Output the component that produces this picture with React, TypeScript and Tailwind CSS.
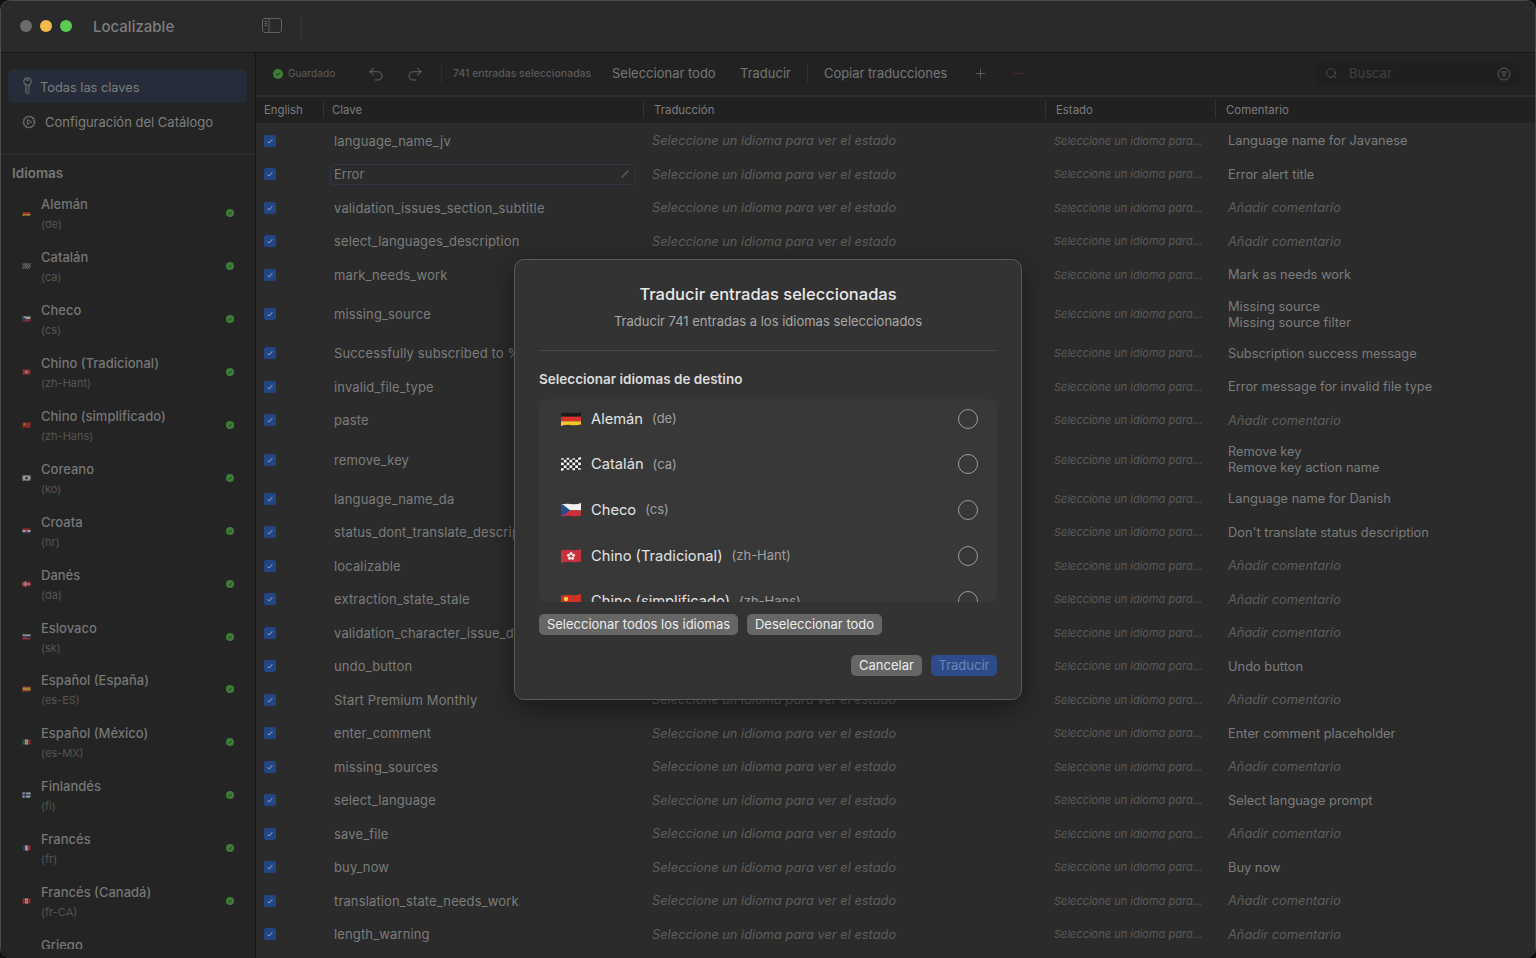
import { useId } from "react"
import { Minus, Plus, Redo2, Search, Undo2 } from "lucide-react"

const languages = [
  ["Alemán", "de", "de"],
  ["Catalán", "ca", "cat"],
  ["Checo", "cs", "cz"],
  ["Chino (Tradicional)", "zh-Hant", "hk"],
  ["Chino (simplificado)", "zh-Hans", "cn"],
  ["Coreano", "ko", "kr"],
  ["Croata", "hr", "hr"],
  ["Danés", "da", "dk"],
  ["Eslovaco", "sk", "sk"],
  ["Español (España)", "es-ES", "es"],
  ["Español (México)", "es-MX", "mx"],
  ["Finlandés", "fi", "fi"],
  ["Francés", "fr", "fr"],
  ["Francés (Canadá)", "fr-CA", "ca"],
  ["Griego", "el", "gr"],
]

const rows: { k: string; c?: string[] }[] = [
  { k: "language_name_jv", c: ["Language name for Javanese"] },
  { k: "Error", c: ["Error alert title"] },
  { k: "validation_issues_section_subtitle" },
  { k: "select_languages_description" },
  { k: "mark_needs_work", c: ["Mark as needs work"] },
  { k: "missing_source", c: ["Missing source", "Missing source filter"] },
  { k: "Successfully subscribed to %@", c: ["Subscription success message"] },
  { k: "invalid_file_type", c: ["Error message for invalid file type"] },
  { k: "paste" },
  { k: "remove_key", c: ["Remove key", "Remove key action name"] },
  { k: "language_name_da", c: ["Language name for Danish"] },
  { k: "status_dont_translate_description", c: ["Don't translate status description"] },
  { k: "localizable" },
  { k: "extraction_state_stale" },
  { k: "validation_character_issue_description" },
  { k: "undo_button", c: ["Undo button"] },
  { k: "Start Premium Monthly" },
  { k: "enter_comment", c: ["Enter comment placeholder"] },
  { k: "missing_sources" },
  { k: "select_language", c: ["Select language prompt"] },
  { k: "save_file" },
  { k: "buy_now", c: ["Buy now"] },
  { k: "translation_state_needs_work" },
  { k: "length_warning" },
]

function Flag({ code, className }: { code: string; className?: string }) {
  const clip = useId()
  const bands = (a: string, b: string, c: string) => (
    <>
      <rect width="20" height="4.67" fill={a} />
      <rect y="4.67" width="20" height="4.67" fill={b} />
      <rect y="9.33" width="20" height="4.67" fill={c} />
    </>
  )
  const vbands = (a: string, b: string, c: string) => (
    <>
      <rect width="6.67" height="14" fill={a} />
      <rect x="6.67" width="6.67" height="14" fill={b} />
      <rect x="13.33" width="6.67" height="14" fill={c} />
    </>
  )
  return (
    <svg viewBox="0 0 20 14" className={className}>
      <clipPath id={clip}>
        <path d="M0 1.4Q5 0.2 10 1T20 0V12.4Q15 13.6 10 12.9T0 14Z" />
      </clipPath>
      <g clipPath={`url(#${clip})`}>
        {code === "de" && bands("#1a1a1a", "#d8332a", "#f5c62e")}
        {code === "cat" &&
          Array.from({ length: 35 }).map((_, i) => (
            <rect
              key={i}
              x={(i % 7) * 2.85}
              y={Math.floor(i / 7) * 2.8}
              width="2.85"
              height="2.8"
              fill={i % 2 === 0 ? "#f2f2f2" : "#2a2a2a"}
            />
          ))}
        {code === "cz" && (
          <>
            <rect width="20" height="7.4" fill="#f0f0f0" />
            <rect y="7.4" width="20" height="7" fill="#c9303a" />
            <path d="M0 0L9 7.2L0 14Z" fill="#24508f" />
          </>
        )}
        {code === "hk" && (
          <>
            <rect width="20" height="14" fill="#c8313e" />
            <g fill="#f5e8e8">
              <circle cx="10" cy="4.4" r="1.5" />
              <circle cx="12.5" cy="6.2" r="1.5" />
              <circle cx="11.5" cy="9.2" r="1.5" />
              <circle cx="8.5" cy="9.2" r="1.5" />
              <circle cx="7.5" cy="6.2" r="1.5" />
            </g>
          </>
        )}
        {code === "cn" && (
          <>
            <rect width="20" height="14" fill="#cf3327" />
            <circle cx="5" cy="5" r="2.2" fill="#f2cf3a" />
          </>
        )}
        {code === "kr" && (
          <>
            <rect width="20" height="14" fill="#ececec" />
            <circle cx="10" cy="7" r="3.4" fill="#c8313e" />
            <path d="M6.6 7a3.4 3.4 0 0 0 6.8 0Z" fill="#24508f" />
            <path d="M2 3l3-2M15 1l3 2M2 11l3 2M15 13l3-2" stroke="#222" strokeWidth="1.2" />
          </>
        )}
        {code === "hr" && (
          <>
            {bands("#d0303a", "#f0f0f0", "#24508f")}
            <rect x="8" y="3.5" width="4" height="6" fill="#c8313e" />
          </>
        )}
        {code === "dk" && (
          <>
            <rect width="20" height="14" fill="#c8313e" />
            <rect x="6" width="2.6" height="14" fill="#f0f0f0" />
            <rect y="5.7" width="20" height="2.6" fill="#f0f0f0" />
          </>
        )}
        {code === "sk" && (
          <>
            {bands("#f0f0f0", "#24508f", "#d0303a")}
            <rect x="3.5" y="3.5" width="5" height="7" rx="1.5" fill="#c8313e" />
          </>
        )}
        {code === "es" && (
          <>
            <rect width="20" height="14" fill="#c8313e" />
            <rect y="3.5" width="20" height="7" fill="#f3c530" />
          </>
        )}
        {code === "mx" && (
          <>
            {vbands("#1f7a4f", "#f0f0f0", "#c8313e")}
            <circle cx="10" cy="7" r="1.5" fill="#8a6a35" />
          </>
        )}
        {code === "fi" && (
          <>
            <rect width="20" height="14" fill="#f0f0f0" />
            <rect x="5.5" width="3.4" height="14" fill="#24508f" />
            <rect y="5.3" width="20" height="3.4" fill="#24508f" />
          </>
        )}
        {code === "fr" && vbands("#24508f", "#f0f0f0", "#d0303a")}
        {code === "ca" && (
          <>
            {vbands("#d0303a", "#f0f0f0", "#d0303a")}
            <path d="M10 4l1.8 3.4L10 10 8.2 7.4Z" fill="#d0303a" />
          </>
        )}
        {code === "gr" && (
          <>
            <rect width="20" height="14" fill="#2b66b1" />
            <rect y="3" width="20" height="1.6" fill="#f0f0f0" />
            <rect y="6.2" width="20" height="1.6" fill="#f0f0f0" />
            <rect y="9.4" width="20" height="1.6" fill="#f0f0f0" />
          </>
        )}
      </g>
    </svg>
  )
}

function GreenCheck({ size }: { size: number }) {
  return (
    <svg width={size} height={size} viewBox="0 0 16 16" className="shrink-0">
      <circle cx="8" cy="8" r="8" fill="#3f7d3a" />
      <path d="M4.8 8.3l2.2 2.2 4.2-4.6" fill="none" stroke="#1d2b1c" strokeWidth="1.6" />
    </svg>
  )
}

function Checkbox() {
  return (
    <div className="flex h-3 w-3 items-center justify-center rounded-[2px] bg-[#234583]">
      <svg width="8" height="8" viewBox="0 0 10 10">
        <path d="M2 5.4l2 2.2 4-5" fill="none" stroke="#9db0cc" strokeWidth="1.1" />
      </svg>
    </div>
  )
}

function Sidebar() {
  return (
    <aside className="flex w-[255px] shrink-0 flex-col border-r border-[#161616] bg-[#242424]">
      <div className="h-[102px] shrink-0 border-b-2 border-[#2b2b2b] pl-[7px] pr-2 pt-4">
        <div className="flex h-[34px] w-[239px] items-center gap-[7px] rounded-md bg-[#262c3a] pl-[14px] text-[12.8px] text-[#7e7e7e]">
          <svg width="11" height="18" viewBox="0 0 11 18" fill="none" stroke="#7a7a7a" strokeWidth="1">
            <circle cx="5.5" cy="4.5" r="3.8" />
            <circle cx="5.5" cy="3" r="0.8" />
            <path d="M4 8v7.5L5.5 17 7 15.5l-1-1 1-1-1-1 1-1V8" />
          </svg>
          <span className="pt-[3px]">Todas las claves</span>
        </div>
        <div className="mt-[2px] flex h-[34px] items-center gap-[9px] pl-[14px] text-[13px] text-[#7e7e7e]">
          <svg width="14" height="14" viewBox="0 0 14 14" fill="none" stroke="#6e6e6e" strokeWidth="1">
            <circle cx="7" cy="7" r="5.5" strokeDasharray="2.2 0.4" strokeWidth="1.6" />
            <path d="M5.5 4.6L9.5 7l-4 2.4Z" />
          </svg>
          <span className="pt-[1px]">Configuración del Catálogo</span>
        </div>
      </div>
      <div className="flex h-[32px] shrink-0 items-end pb-[6px] pl-[11px] text-[13.5px] font-semibold leading-[16px] text-[#777]">Idiomas</div>
      <div className="h-[762px] overflow-hidden">
        {languages.map(([name, code, flag]) => (
          <div key={code} className="flex h-[52.9px] items-center pl-[21px] pr-[21px]">
            <Flag code={flag} className="mr-[10px] h-[6px] w-[9px] shrink-0 opacity-60" />
            <div className="mt-[3px] flex-1">
              <div className="text-[13px] font-medium leading-[19px] text-[#767676]">{name}</div>
              <div className="text-[11px] leading-[20px] text-[#555]">({code})</div>
            </div>
            <GreenCheck size={8} />
          </div>
        ))}
      </div>
    </aside>
  )
}

function Toolbar() {
  return (
    <div className="flex h-[42px] shrink-0 items-center bg-[#222222] pb-[1px] pl-[17px] text-[#777]">
      <GreenCheck size={10} />
      <span className="ml-[5px] w-[48px] text-[10.2px] text-[#5c5c5c]">Guardado</span>
      <Undo2 className="ml-[31px] text-[#767676]" size={18} strokeWidth={1.1} />
      <Redo2 className="ml-[21px] text-[#767676]" size={18} strokeWidth={1.1} />
      <div className="ml-[17px] h-5 w-px bg-[#2e2e2e]" />
      <span className="ml-[11px] w-[139px] text-[10.5px] font-medium text-[#5a5a5a]">741 entradas seleccionadas</span>
      <span className="ml-[20px] w-[105px] text-[13px]">Seleccionar todo</span>
      <span className="ml-[23px] w-[51px] text-[13px]">Traducir</span>
      <div className="ml-[16px] h-5 w-px bg-[#2e2e2e]" />
      <span className="ml-[16px] w-[125px] text-[12.9px]">Copiar traducciones</span>
      <Plus className="ml-[24px] text-[#727272]" size={15} strokeWidth={1.1} />
      <Minus className="ml-[23px] text-[#5f3230]" size={15} strokeWidth={1.1} />
      <div className="ml-[290px] flex h-6 w-[204px] items-center rounded-md bg-[#1f1f1f] pl-[9px] pr-[9px]">
        <Search size={13} strokeWidth={1.3} className="text-[#5e5e5e]" />
        <span className="ml-[11px] flex-1 text-[13px] text-[#404040]">Buscar</span>
        <svg width="14" height="14" viewBox="0 0 14 14" fill="none" stroke="#5c5c5c" strokeWidth="1">
          <circle cx="7" cy="7" r="6" />
          <path d="M3.5 5h7M4.8 7.2h4.4M6 9.4h2" />
        </svg>
      </div>
    </div>
  )
}

function TableHeader() {
  const cols = [
    ["English", "w-[68px] pl-2"],
    ["Clave", "w-[320px] pl-2"],
    ["Traducción", "w-[402px] pl-[10px]"],
    ["Estado", "w-[170px] pl-[10px]"],
    ["Comentario", "flex-1 pl-[10px]"],
  ]
  return (
    <div className="flex h-[28px] shrink-0 items-center border-t-2 border-[#2e2e2e] bg-[#212121] pt-[1px] text-[11.4px] text-[#7c7c7c]">
      {cols.map(([label, cls], i) => (
        <div key={label} className={`relative ${cls}`}>
          {label}
          {i < 4 && <div className="absolute right-0 top-[-1px] h-[17px] w-px bg-[#333]" />}
        </div>
      ))}
    </div>
  )
}

function TableRow({ k, c }: { k: string; c?: string[] }) {
  const double = c && c.length > 1
  return (
    <div className={`flex items-center leading-[16px] ${double ? "h-[45px]" : "h-[33.5px]"}`}>
      <div className="w-[68px] pl-2">
        <Checkbox />
      </div>
      <div className="w-[320px] shrink-0 pl-[6px]">
        {k === "Error" ? (
          <div className="flex h-[21px] w-[306px] items-center justify-between rounded-[3px] border border-[#2f3646] pl-[3px] pr-[5px] text-[13px] text-[#7c7c7c]">
            Error
            <svg width="10" height="10" viewBox="0 0 10 10">
              <path d="M1.5 8.5L8.5 1.5" stroke="#5d5d5d" strokeWidth="1.2" />
            </svg>
          </div>
        ) : (
          <div className="overflow-hidden whitespace-nowrap pl-[4px] text-[13px] tracking-[0.14px] text-[#7c7c7c]">{k}</div>
        )}
      </div>
      <div className="w-[402px] shrink-0 pl-2 pt-[1px] text-[12.85px] italic text-[#5e5e5e]">Seleccione un idioma para ver el estado</div>
      <div className="w-[174px] shrink-0 pl-2 text-[11px] italic text-[#5a5a5a]">Seleccione un idioma para...</div>
      <div className="flex-1 pl-2 pt-[1px] text-[12.85px]">
        {c ? (
          c.map((line) => (
            <div key={line} className="text-[#7c7c7c]">
              {line}
            </div>
          ))
        ) : (
          <div className="italic text-[#5e5e5e]">Añadir comentario</div>
        )}
      </div>
    </div>
  )
}

function Modal() {
  return (
    <div className="absolute left-[513px] top-[258px] flex h-[441px] w-[508px] flex-col rounded-[10px] border border-[#5a5a5a] bg-[#333333] px-6 shadow-[0_8px_30px_rgba(0,0,0,0.45)]">
      <div className="mt-[23px] text-center text-[16.5px] font-medium leading-[22px] text-[#e8e8e8]">Traducir entradas seleccionadas</div>
      <div className="mt-[7px] text-center text-[13px] leading-[18px] text-[#a8a8a8]">Traducir 741 entradas a los idiomas seleccionados</div>
      <div className="mt-[20px] h-px bg-[#484848]" />
      <div className="mt-[20px] text-[13.5px] font-semibold leading-[16px] text-[#dcdcdc]">Seleccionar idiomas de destino</div>
      <div className="mt-[12px] h-[203px] overflow-hidden rounded-lg bg-[#383838]">
        {languages.slice(0, 5).map(([name, code, flag], i) => (
          <div key={code} className={`flex h-[45.67px] items-center pl-[22px] pr-[19px] ${i === 0 ? "mt-[-3px]" : ""}`}>
            <Flag code={flag} className="h-[14px] w-[20px] shrink-0" />
            <span className="ml-[10px] text-[14.7px] text-[#e2e2e2]">{name}</span>
            <span className="ml-[9px] flex-1 text-[13px] text-[#a0a0a0]">({code})</span>
            <div className="h-5 w-5 rounded-full border border-[#9a9a9a]" />
          </div>
        ))}
      </div>
      <div className="mt-[12px] flex gap-[9px]">
        <div className="flex h-[21px] w-[199px] items-center justify-center rounded-[5px] bg-[#666666] text-[13px] text-[#ececec]">Seleccionar todos los idiomas</div>
        <div className="flex h-[21px] w-[135px] items-center justify-center rounded-[5px] bg-[#666666] text-[13px] text-[#ececec]">Deseleccionar todo</div>
      </div>
      <div className="mt-[20px] flex justify-end gap-[9px]">
        <div className="flex h-[21px] w-[71px] items-center justify-center rounded-[5px] bg-[#666666] text-[13px] text-[#ececec]">Cancelar</div>
        <div className="flex h-[21px] w-[66px] items-center justify-center rounded-[5px] bg-[#2d4a8a] text-[13px] text-[#6f86b5]">Traducir</div>
      </div>
    </div>
  )
}

export default function App() {
  return (
    <div className="h-[958px] w-[1536px] overflow-hidden bg-[#111] font-['Inter','Liberation_Sans',sans-serif]">
      <div className="relative flex h-full flex-col overflow-hidden rounded-[10px] border border-b-0 border-[#4a4a4a]">
        <header className="flex h-[52px] shrink-0 items-center border-b border-[#161616] bg-[#2a2a2a] pb-[2px] pl-[19px]">
          <div className="h-3 w-3 rounded-full bg-[#6b6b6b]" />
          <div className="ml-2 h-3 w-3 rounded-full bg-[#f2bb4b]" />
          <div className="ml-2 h-3 w-3 rounded-full bg-[#5ecb55]" />
          <span className="ml-[21px] mt-[4px] w-[169px] text-[15px] font-medium text-[#7d7d7d]">Localizable</span>
          <svg width="20" height="15" viewBox="0 0 20 15" fill="none" stroke="#616161" strokeWidth="1">
            <rect x="0.5" y="0.5" width="19" height="14" rx="2.5" />
            <path d="M7 0.5v14M2.5 3.5h2.5M2.5 5.5h2.5M2.5 7.5h2.5" />
          </svg>
          <div className="ml-[19px] h-7 w-px bg-[#353535]" />
        </header>
        <div className="flex min-h-0 flex-1">
          <Sidebar />
          <main className="flex min-w-0 flex-1 flex-col bg-[#2b2b2b]">
            <Toolbar />
            <TableHeader />
            <div className="min-h-0 flex-1 overflow-hidden pt-[1px]">
              {rows.map((r) => (
                <TableRow key={r.k} k={r.k} c={r.c} />
              ))}
            </div>
          </main>
        </div>
        <Modal />
      </div>
    </div>
  )
}
